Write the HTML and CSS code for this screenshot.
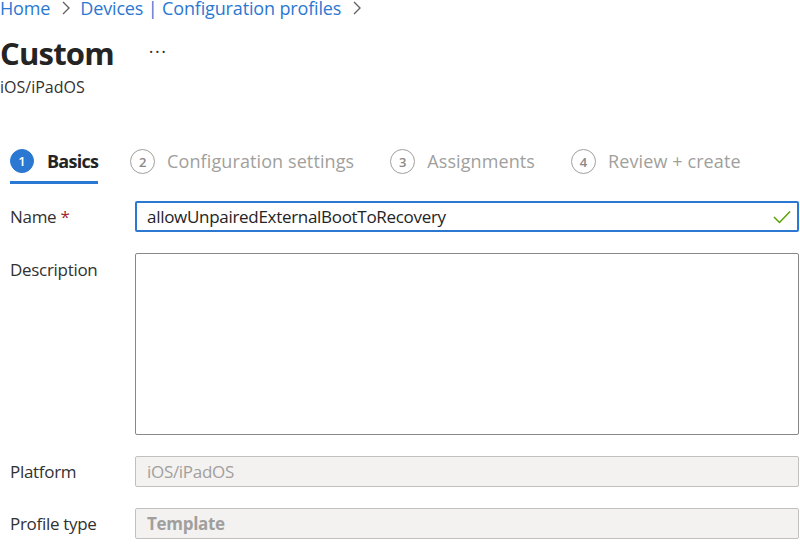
FILE: index.html
```html
<!DOCTYPE html>
<html>
<head>
<meta charset="utf-8">
<link rel="stylesheet" href="styles.css">
</head>
<body>
<div class="page">
  <nav class="crumbs">
    <a class="crumb">Home</a>
    <span class="sep"><svg width="10" height="16" viewBox="0 0 10 16"><path d="M2 2 L8 8 L2 14" fill="none" stroke="#605e5c" stroke-width="1.3"/></svg></span>
    <a class="crumb">Devices | Configuration profiles</a>
    <span class="sep"><svg width="10" height="16" viewBox="0 0 10 16"><path d="M2 2 L8 8 L2 14" fill="none" stroke="#605e5c" stroke-width="1.3"/></svg></span>
  </nav>
  <div class="title-row">
    <h1 class="title">Custom</h1>
    <span class="more">···</span>
  </div>
  <div class="subtitle">iOS/iPadOS</div>

  <div class="tabs">
    <div class="tab active"><span class="num">1</span><span class="label">Basics</span></div>
    <div class="tab"><span class="num">2</span><span class="label">Configuration settings</span></div>
    <div class="tab"><span class="num">3</span><span class="label">Assignments</span></div>
    <div class="tab"><span class="num">4</span><span class="label">Review + create</span></div>
  </div>

  <div class="form">
    <div class="row row-name">
      <label class="lbl">Name <span class="req">*</span></label>
      <div class="field input focused">
        <span class="value">allowUnpairedExternalBootToRecovery</span>
        <svg class="check" width="18" height="14" viewBox="0 0 18 14"><path d="M1 7 L6.5 12.5 L17 1.5" fill="none" stroke="#57a300" stroke-width="1.5"/></svg>
      </div>
    </div>
    <div class="row row-desc">
      <label class="lbl">Description</label>
      <div class="field textarea"></div>
    </div>
    <div class="row row-platform">
      <label class="lbl">Platform</label>
      <div class="field input disabled"><span class="value">iOS/iPadOS</span></div>
    </div>
    <div class="row row-type">
      <label class="lbl">Profile type</label>
      <div class="field input disabled"><span class="value strong">Template</span></div>
    </div>
  </div>
</div>
</body>
</html>
```

FILE: styles.css
```css
* { box-sizing: border-box; }
html, body { margin: 0; padding: 0; background: #fff; }
body {
  font-family: "Open Sans", "Noto Sans", "Liberation Sans", sans-serif;
  color: #323130;
  width: 800px;
  height: 551px;
  overflow: hidden;
}
.page { width: 800px; }

.crumbs {
  display: flex;
  align-items: center;
  height: 20px;
  margin-top: -2px;
  font-size: 18px;
  line-height: 20px;
}
.crumb { color: #2b78d2; letter-spacing: -0.15px; }
.sep { display: flex; align-items: center; margin: 0 9px 0 11px; }

.title-row {
  display: flex;
  align-items: center;
  margin-top: 17px;
  height: 36px;
}
.title {
  margin: 0;
  font-size: 31px;
  font-weight: 700;
  line-height: 36px;
  letter-spacing: -0.8px;
  color: #242424;
}
.more {
  margin-left: 35px;
  font-size: 18px;
  line-height: 20px;
  letter-spacing: 1.5px;
  color: #323130;
  margin-top: -4px;
}
.subtitle {
  font-size: 16px;
  line-height: 20px;
  margin-top: 6px;
  color: #323130;
}

.tabs {
  display: flex;
  margin-top: 52px;
  padding-left: 10px;
  height: 35px;
}
.tab {
  display: flex;
  align-items: flex-start;
  margin-right: 36px;
  height: 35px;
  color: #a19f9d;
}
.tab .num {
  width: 25px;
  height: 25px;
  border-radius: 50%;
  border: 1.5px solid #a19f9d;
  font-size: 13px;
  font-weight: 600;
  color: #8a8886;
  display: flex;
  align-items: center;
  justify-content: center;
  margin-right: 12px;
}
.tab .label {
  font-size: 18px;
  line-height: 25px;
  letter-spacing: 0.1px;
}
.tab.active { border-bottom: 3px solid #2b78d2; margin-right: 32px; }
.tab.active .num { width: 24px; height: 24px; background: #2b78d2; border-color: #2b78d2; color: #fff; margin-right: 13px; }
.tab.active .label { color: #242424; font-weight: 700; letter-spacing: -0.75px; line-height: 24px; }

.form { margin-top: 17px; }
.row { display: flex; align-items: flex-start; }
.lbl {
  width: 135px;
  padding-left: 10px;
  font-size: 17px;
  color: #323130;
  letter-spacing: -0.3px;
}
.req { color: #a4262c; }
.field {
  flex: 1;
  border: 1px solid #8a8886;
  border-radius: 2px;
  margin-right: 1px;
}
.input {
  height: 31px;
  display: flex;
  align-items: center;
  padding: 0 10px 0 11px;
}
.value { font-size: 17px; letter-spacing: -0.3px; color: #242424; flex: 1; }
.focused { border: 2px solid #2b78d2; height: 31px; padding-left: 10px; }
.check { margin-right: -4px; }
.row-name .lbl { line-height: 31px; }
.row-desc { margin-top: 21px; }
.row-desc .lbl { line-height: 33px; }
.textarea { height: 182px; }
.row-platform { margin-top: 21px; }
.row-platform .lbl, .row-type .lbl { line-height: 31px; }
.row-type { margin-top: 21px; }
.disabled { background: #f3f2f1; border-color: #c2c0be; }
.disabled .value { color: #a19f9d; }
.value.strong { font-weight: 700; color: #a19f9d; }
```
